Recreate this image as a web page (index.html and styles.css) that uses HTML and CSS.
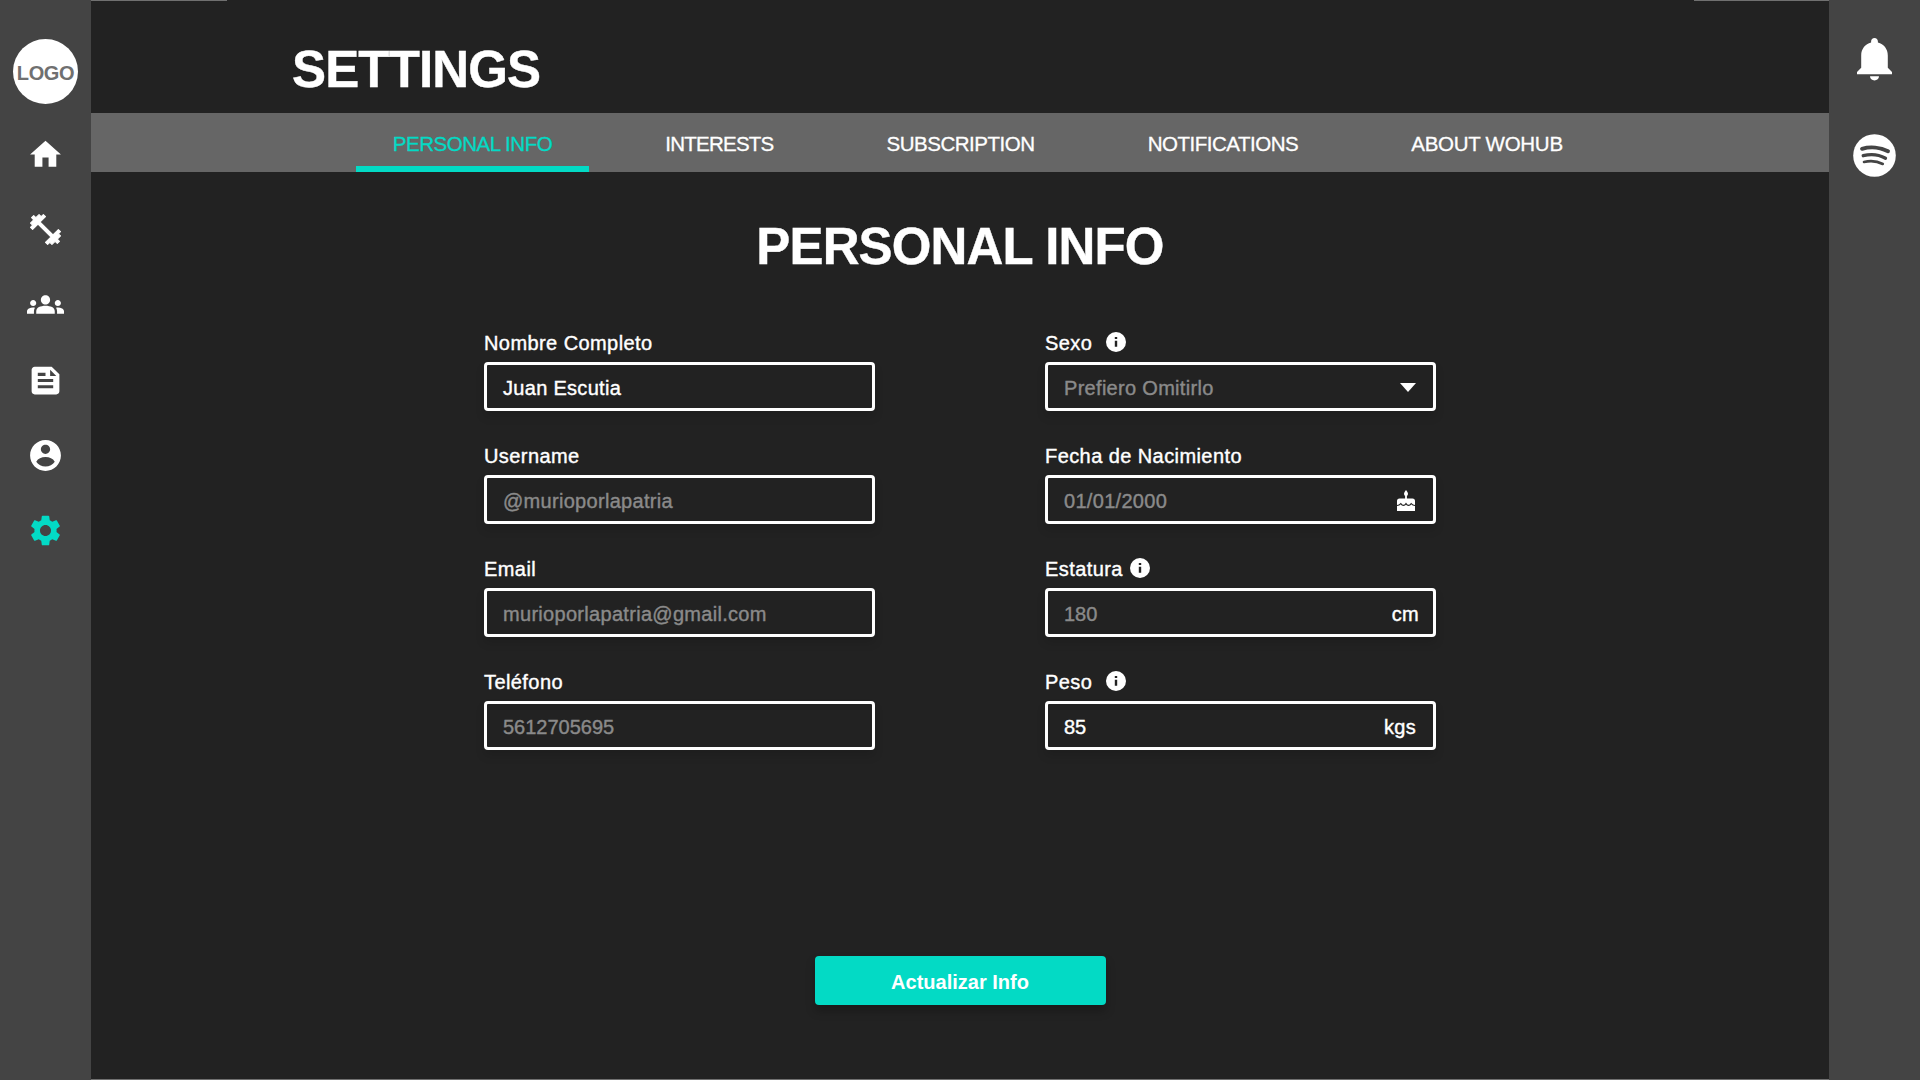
FILE: index.html
```html
<!DOCTYPE html>
<html lang="es">
<head>
<meta charset="utf-8">
<title>Settings</title>
<link rel="stylesheet" href="styles.css">
</head>
<body>
<div class="app">
  <aside class="sidebar">
    <div class="logo">LOGO</div>
    <nav class="side-nav">
      <svg class="icon" viewBox="0 0 24 24"><path d="M10 20v-6h4v6h5v-8h3L12 3 2 12h3v8z"/></svg>
      <svg class="icon icon-bold" viewBox="0 0 24 24"><path d="M20.57 14.86L22 13.43 20.57 12 17 15.57 8.43 7 12 3.43 10.57 2 9.14 3.43 7.71 2 5.57 4.14 4.14 2.71 2.71 4.14l1.43 1.43L2 7.71l1.43 1.43L2 10.57 3.43 12 7 8.43 15.57 17 12 20.57 13.43 22l1.43-1.43L16.29 22l2.14-2.14 1.43 1.43 1.43-1.43-1.43-1.43L22 16.29z"/></svg>
      <svg class="icon" viewBox="0 0 24 24"><path d="M12 12.75c1.63 0 3.07.39 4.24.9 1.08.48 1.76 1.56 1.76 2.73V18H6v-1.61c0-1.18.68-2.26 1.76-2.73 1.17-.52 2.61-.91 4.24-.91zM4 13c1.1 0 2-.9 2-2s-.9-2-2-2-2 .9-2 2 .9 2 2 2zm1.13 1.1c-.37-.06-.74-.1-1.13-.1-.99 0-1.93.21-2.78.58C.48 14.9 0 15.62 0 16.43V18h4.5v-1.61c0-.83.23-1.61.63-2.29zM20 13c1.1 0 2-.9 2-2s-.9-2-2-2-2 .9-2 2 .9 2 2 2zm4 3.43c0-.81-.48-1.53-1.22-1.85-.85-.37-1.79-.58-2.78-.58-.39 0-.76.04-1.13.1.4.68.63 1.46.63 2.29V18H24v-1.57zM12 6c1.66 0 3 1.34 3 3s-1.34 3-3 3-3-1.34-3-3 1.34-3 3-3z"/></svg>
      <svg class="icon" viewBox="0 0 24 24"><path d="M16 3H5c-1.1 0-2 .9-2 2v14c0 1.1.9 2 2 2h14c1.1 0 2-.9 2-2V8l-5-5zM7 7h5v2H7V7zm10 10H7v-2h10v2zm0-4H7v-2h10v2zm-2-4V5l4 4h-4z"/></svg>
      <svg class="icon" viewBox="0 0 24 24"><path d="M12 2C6.48 2 2 6.48 2 12s4.48 10 10 10 10-4.48 10-10S17.52 2 12 2zm0 3c1.66 0 3 1.34 3 3s-1.34 3-3 3-3-1.34-3-3 1.34-3 3-3zm0 14.2c-2.500 0-4.710-1.280-6-3.220C7.200 14 9.300 13 12 13s4.800 1 6 2.980c-1.290 1.940-3.500 3.220-6 3.220z"/></svg>
      <svg class="icon icon-active" viewBox="0 0 24 24"><path d="M19.14 12.94c.04-.3.06-.61.06-.94 0-.32-.02-.64-.07-.94l2.03-1.58c.18-.14.23-.41.12-.61l-1.92-3.32c-.12-.22-.37-.29-.59-.22l-2.39.96c-.5-.38-1.03-.7-1.62-.94l-.36-2.54c-.04-.24-.24-.41-.48-.41h-3.84c-.24 0-.43.17-.47.41l-.36 2.54c-.59.24-1.13.57-1.62.94l-2.39-.96c-.22-.08-.47 0-.59.22L2.74 8.87c-.12.21-.08.47.12.61l2.03 1.58c-.05.3-.09.63-.09.94s.02.64.07.94l-2.03 1.58c-.18.14-.23.41-.12.61l1.92 3.32c.12.22.37.29.59.22l2.39-.96c.5.38 1.03.7 1.62.94l.36 2.54c.05.24.24.41.48.41h3.84c.24 0 .44-.17.47-.41l.36-2.54c.59-.24 1.13-.56 1.62-.94l2.39.96c.22.08.47 0 .59-.22l1.92-3.32c.12-.22.07-.47-.12-.61l-2.01-1.58zM12 15.6c-1.98 0-3.6-1.62-3.6-3.6s1.62-3.6 3.6-3.6 3.6 1.62 3.6 3.6-1.62 3.6-3.6 3.6z"/></svg>
    </nav>
  </aside>

  <main class="main">
    <header class="page-head">
      <h1 class="title">SETTINGS</h1>
    </header>
    <nav class="tabs">
      <span class="tab tab-active">PERSONAL INFO</span>
      <span class="tab tab-tight">INTERESTS</span>
      <span class="tab">SUBSCRIPTION</span>
      <span class="tab">NOTIFICATIONS</span>
      <span class="tab tab-loose">ABOUT WOHUB</span>
    </nav>
    <section class="content">
      <h2 class="title section-title">PERSONAL INFO</h2>
      <div class="form">
        <div class="field">
          <div class="label">Nombre Completo</div>
          <div class="box"><span class="filled">Juan Escutia</span></div>
        </div>
        <div class="field">
          <div class="label label-spaced">Sexo <svg class="info" viewBox="0 0 20 20"><circle cx="10" cy="10" r="10"/><path class="info-mark" d="M8.800 4.900h2.400v2.200H8.800zM8.800 8.700h2.400v6H8.800z"/></svg></div>
          <div class="box"><span>Prefiero Omitirlo</span><svg class="caret" viewBox="0 0 16 9"><path d="M0 0h16L8 9z"/></svg></div>
        </div>
        <div class="field">
          <div class="label">Username</div>
          <div class="box"><span>@murioporlapatria</span></div>
        </div>
        <div class="field">
          <div class="label">Fecha de Nacimiento</div>
          <div class="box"><span>01/01/2000</span><svg class="cake" viewBox="0 0 18 21"><path d="M9 0c1 1.500 2 2.600 2 3.900a2 2 0 0 1-4 0C7 2.600 8 1.500 9 0zM8.100 5h1.800v3.500H15.500a2.500 2.500 0 0 1 2.500 2.500V21H0V11a2.500 2.500 0 0 1 2.500-2.500h5.600z"/><path class="icing" d="M-.5 15.500C2 15.500 2.500 15 3.800 13.600c1.600 2.400 3.700 2.400 5.200 0 1.500 2.400 3.600 2.400 5.200 0 1.300 1.400 1.800 1.900 4.300 1.900"/></svg></div>
        </div>
        <div class="field">
          <div class="label">Email</div>
          <div class="box"><span>murioporlapatria@gmail.com</span></div>
        </div>
        <div class="field">
          <div class="label">Estatura <svg class="info" viewBox="0 0 20 20"><circle cx="10" cy="10" r="10"/><path class="info-mark" d="M8.800 4.900h2.400v2.200H8.800zM8.800 8.700h2.400v6H8.800z"/></svg></div>
          <div class="box"><span class="digits">180</span><span class="filled unit-cm">cm</span></div>
        </div>
        <div class="field">
          <div class="label">Teléfono</div>
          <div class="box"><span class="digits">5612705695</span></div>
        </div>
        <div class="field">
          <div class="label label-spaced">Peso <svg class="info" viewBox="0 0 20 20"><circle cx="10" cy="10" r="10"/><path class="info-mark" d="M8.800 4.900h2.400v2.200H8.800zM8.800 8.700h2.400v6H8.800z"/></svg></div>
          <div class="box"><span class="filled digits">85</span><span class="filled">kgs</span></div>
        </div>
      </div>
      <button class="submit">Actualizar Info</button>
    </section>
  </main>

  <aside class="rail">
    <svg class="bell" viewBox="0 0 35 43"><path d="M17.500 0c2 0 3.400 1.500 3.400 3.400v1.200c5.900 1.500 9.900 6.500 9.900 12.800v12.300l4.200 4.300v2.300H0V34l4.200-4.300V17.400C4.200 11.100 8.200 6.100 14.100 4.600V3.400C14.100 1.500 15.500 0 17.500 0zM13 38.300h9c0 2.300-2 4.200-4.500 4.200s-4.500-1.900-4.500-4.200z"/></svg>
    <svg class="spotify" viewBox="0 0 43 43"><circle cx="21.500" cy="21.500" r="21.300"/><path class="wave wave-l" d="M9 14.800c8-2.400 18.300-1.600 26 2.500"/><path class="wave wave-m" d="M10.200 21.700c7.200-1.900 15.700-1.200 22.300 2.500"/><path class="wave wave-s" d="M11 28c6.300-1.500 13-1 18.800 2"/></svg>
  </aside>
</div>
</body>
</html>
```
FILE: styles.css
```css
* { box-sizing: border-box; }

body {
  margin: 0;
  background: #222;
  color: #fff;
  font-family: "Liberation Sans", Arial, sans-serif;
}

svg { display: block; fill: #fff; flex: none; }

.app { display: flex; height: 1080px; }

.sidebar, .rail {
  width: 91px;
  flex: none;
  background: #444;
  display: flex;
  flex-direction: column;
  align-items: center;
}

.sidebar { padding-top: 39px; }

.logo {
  width: 65px;
  height: 65px;
  border-radius: 50%;
  background: #fff;
  color: #707070;
  font-size: 20px;
  font-weight: 700;
  line-height: 68px;
  letter-spacing: -0.400px;
  text-align: center;
}

.side-nav {
  display: flex;
  flex-direction: column;
  gap: 38.200px;
  margin-top: 32px;
}

.icon { width: 37px; height: 37px; }
.icon-bold { stroke: #fff; stroke-width: 0.700; stroke-linejoin: round; padding: 0.500px; }
.icon-active { fill: #03dac5; }

.rail { padding-top: 38px; gap: 53px; }
.bell { width: 35px; height: 43px; }
.spotify { width: 43px; height: 43px; }
.wave { fill: none; stroke: #444; stroke-linecap: round; }
.wave-l { stroke-width: 3.900; }
.wave-m { stroke-width: 3.300; }
.wave-s { stroke-width: 2.600; }

.main {
  flex: 1;
  display: flex;
  flex-direction: column;
  border-bottom: 1px solid #707070;
  background:
    linear-gradient(#707070, #707070) left top / 136px 1px no-repeat,
    linear-gradient(#707070, #707070) right top / 135px 1px no-repeat;
}

.page-head { height: 113px; padding: 39px 0 0 201px; }

.title {
  margin: 0;
  font-size: 51px;
  line-height: 61px;
  font-weight: 700;
  letter-spacing: -0.850px;
  -webkit-text-stroke: 0.400px currentColor;
}

.tabs {
  height: 59px;
  background: #666;
  display: flex;
  padding-left: 265px;
  gap: 39.500px;
}

.tab {
  height: 58.500px;
  padding: 0 36.750px;
  font-size: 20.500px;
  line-height: 61px;
  letter-spacing: -0.470px;
  white-space: nowrap;
  -webkit-text-stroke: 0.300px currentColor;
}

.tab-tight { letter-spacing: -0.750px; }
.tab-loose { letter-spacing: -0.280px; }
.tab-active { color: #03dac5; border-bottom: 6.500px solid #03dac5; }

.content {
  flex: 1;
  display: flex;
  flex-direction: column;
  align-items: center;
}

.section-title { margin-top: 44px; }

.form {
  display: grid;
  grid-template-columns: 391px 391px;
  column-gap: 170px;
  row-gap: 34px;
  margin-top: 55px;
}

.field { height: 79px; }

.label {
  display: flex;
  align-items: flex-start;
  gap: 7px;
  height: 20px;
  margin-bottom: 10px;
  font-size: 20px;
  line-height: 22px;
  letter-spacing: 0.420px;
  -webkit-text-stroke: 0.400px currentColor;
}

.label-spaced { gap: 13.500px; }

.info { width: 20px; height: 20px; }
.info-mark { fill: #222; }

.box {
  display: flex;
  justify-content: space-between;
  align-items: center;
  height: 49px;
  padding: 4px 17px 0 16px;
  border: 3px solid #fff;
  border-radius: 4px;
  box-shadow: 0 6px 10px rgba(0, 0, 0, 0.120);
  color: #8a8a8a;
  font-size: 20px;
  letter-spacing: 0.300px;
  -webkit-text-stroke: 0.400px currentColor;
}

.filled { color: #fff; }
.digits { letter-spacing: 0; }
.unit-cm { margin-right: -3px; }
.caret { width: 16px; height: 9px; margin-bottom: 3px; }
.cake { width: 18px; height: 21px; margin: 0 1px 2px 0; }
.icing { fill: none; stroke: #222; stroke-width: 1.100; }

.submit {
  width: 291px;
  height: 49px;
  margin-top: 206px;
  padding: 3px 0 0;
  border: 0;
  border-radius: 4px;
  background: #03dac5;
  box-shadow: 0 6px 10px rgba(0, 0, 0, 0.250);
  color: #fff;
  font-family: inherit;
  font-size: 20px;
  font-weight: 700;
}
```
